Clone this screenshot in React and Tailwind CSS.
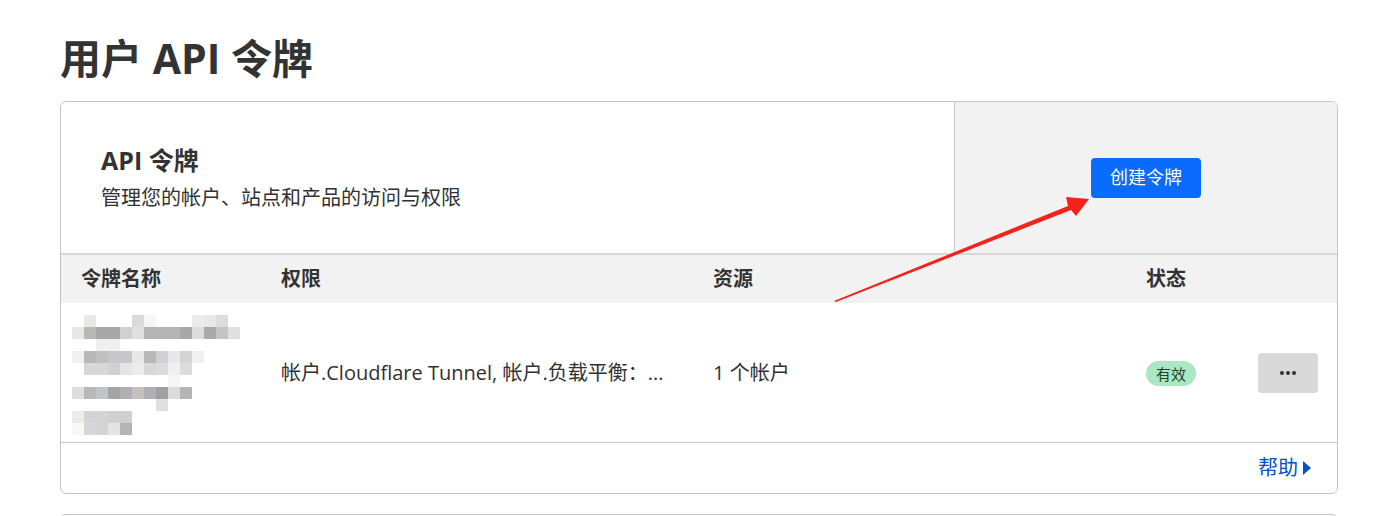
import React from 'react';

const font = { fontFamily: '"Open Sans", "Noto Sans CJK SC", sans-serif' };

// mosaic of the redacted token name, 12px cells
const blur = [
  [null, '#e8e8e8', null, null, null, '#dadada', '#f4f6f8', null, null, null, '#ececec', '#e8e8e8', '#dcdcdc', null],
  ['#e8e8e6', '#b8b8b4', '#a8a8aa', '#a8a8aa', '#d0d0d2', '#e0e0dc', '#b4b4b6', '#b4b4b4', '#b4b4b4', '#a8a8a8', '#dcdcd8', '#aaaaac', '#c4c4c4', '#e0e0e0'],
  [null, null, '#f0f0f0', '#f0f0f2', null, null, null, null, null, null, null, null, null, null],
  ['#f0f0f0', '#b8b8b8', '#c0c0c0', '#c8c8c8', '#c8c8ca', '#e8e8e8', '#b8b8b8', '#d0d0d0', '#e8e8ea', '#d4d4d4', '#f0f0f0', null, null, null],
  [null, '#d8d8d8', '#d8d8d8', '#d0d0d0', '#e4e4e6', '#ececec', '#d8d8d6', '#dcdcde', '#f0f0f0', '#dcdcde', null, null, null, null],
  [null, null, null, null, null, null, null, null, '#f6f6f6', null, null, null, null, null],
  ['#e0dcdc', '#b8b8b8', '#c0c4c8', '#a4a4a4', '#b0b0b4', '#c4c0bc', '#b0b0b4', '#a0a0a0', '#dcdcdc', '#b4b4b4', null, null, null, null],
  [null, null, null, null, null, null, null, '#e0e0e0', null, null, null, null, null, null],
  ['#ececec', '#d4d4d4', '#d4d4d4', '#d0d0d0', '#d0d0d0', null, null, null, null, null, null, null, null, null],
  ['#f8f8f4', '#d4d8dc', '#d4d4d4', '#e4e4e4', '#b4b4b4', null, null, null, null, null, null, null, null, null],
];

const Mosaic = () => (
  <div className="flex flex-col">
    {blur.map((row, i) => (
      <div key={i} className="flex">
        {row.map((c, j) => (
          <div key={j} className="w-[12px] h-[12px]" style={{ backgroundColor: c || 'transparent' }} />
        ))}
      </div>
    ))}
  </div>
);

const cols = 'grid grid-cols-[200px_432px_433px_112px_1fr] items-center px-[20px]';

export default function App() {
  return (
    <div className="relative min-h-[516px] bg-white text-[#313131] pl-[60px] pr-[46px] pt-[30px]" style={font}>
      <h1 className="text-[41px] font-bold leading-[56px] text-[#333]">用户 API 令牌</h1>

      <div className="mt-[15px] border border-[#c4c4c4] rounded-[6px] overflow-hidden">
        <div className="flex h-[151px]">
          <div className="flex-1 flex flex-col justify-center pl-[40px]">
            <h2 className="text-[25px] font-bold leading-[32px] text-[#333]">API 令牌</h2>
            <p className="mt-[8px] text-[20px] leading-[28px]">管理您的帐户、站点和产品的访问与权限</p>
          </div>
          <div className="w-[383px] bg-[#f2f2f2] border-l border-[#c8c8c8] flex items-center justify-center">
            <button className="h-[40px] px-[19px] rounded-[4px] bg-[#0a6cff] text-white text-[18px]">创建令牌</button>
          </div>
        </div>

        <div className={`${cols} h-[50px] bg-[#f2f2f2] border-t-2 border-[#d8d8d8] text-[20px] font-bold text-[#333]`}>
          <div>令牌名称</div>
          <div>权限</div>
          <div>资源</div>
          <div>状态</div>
          <div />
        </div>

        <div className={`${cols} h-[140px] border-b border-[#c8c8c8] text-[20px]`}>
          <div className="-ml-[9px] pt-[4px]"><Mosaic /></div>
          <div className="whitespace-nowrap">帐户.Cloudflare Tunnel, 帐户.负载平衡：...</div>
          <div>1 个帐户</div>
          <div>
            <span className="inline-flex items-center h-[25px] px-[10px] rounded-full bg-[#a9e8c2] text-[15px] text-[#23422e]">有效</span>
          </div>
          <div>
            <button className="w-[60px] h-[40px] rounded-[4px] bg-[#d9d9d9] flex items-center justify-center gap-[2px]">
              <span className="w-[4px] h-[4px] rounded-full bg-[#333]" />
              <span className="w-[4px] h-[4px] rounded-full bg-[#333]" />
              <span className="w-[4px] h-[4px] rounded-full bg-[#333]" />
            </button>
          </div>
        </div>

        <div className="h-[50px] flex items-center justify-end pr-[25px]">
          <a className="flex items-center gap-[4px] text-[20px] text-[#0051c3]">
            帮助
            <svg width="10" height="16" viewBox="0 0 10 16"><polygon points="1,1 9,8 1,15" fill="#0051c3" /></svg>
          </a>
        </div>
      </div>

      <div className="mt-[20px] h-[120px] border border-[#c4c4c4] rounded-[6px]" />

      <svg className="absolute left-0 top-0 pointer-events-none" width="1384" height="516">
        <polygon points="834,301 1068,206 1066,197 1089,199 1076,216 1071,210 836,302" fill="#f5221b" />
      </svg>
    </div>
  );
}
